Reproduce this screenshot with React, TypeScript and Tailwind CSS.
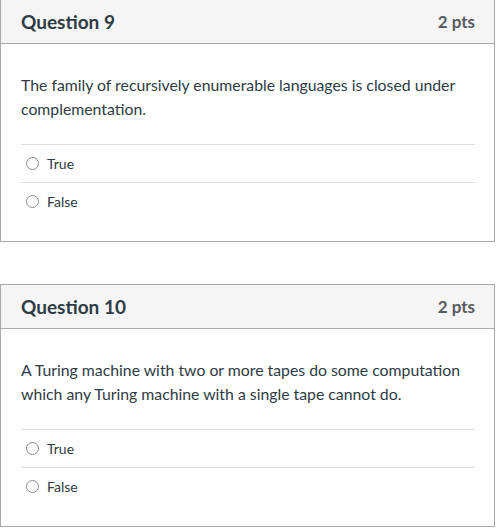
import React from "react";

function Radio() {
  return (
    <span className="inline-block w-[13px] h-[13px] rounded-full border border-[#8a8a8a] bg-white shrink-0" />
  );
}

function Question({ title, text, first }: { title: string; text: React.ReactNode; first?: boolean }) {
  return (
    <div className={`w-[495px] border border-[#a9a9a9] bg-white ${first ? "-mt-px" : "mt-[42px]"}`}>
      <div className="h-[44px] bg-[#f5f5f5] border-b border-[#a9a9a9] flex items-center justify-between pl-[20px] pr-[19px]">
        <span className="text-[19px] font-bold text-[#2d3b45] leading-none">{title}</span>
        <span className="text-[17px] font-bold text-[#555a5e] leading-none">2 pts</span>
      </div>
      <div className="pl-[20px] pr-[19px] pt-[29px] pb-[21px]">
        <div className="text-[15.8px] leading-[24px] text-[#2d3b45]">{text}</div>
        <div className="mt-[23px]">
          {["True", "False"].map((a) => (
            <div key={a} className="h-[38px] border-t border-[#dcdfe1] flex items-center pl-[5px] gap-[8px]">
              <Radio />
              <span className="text-[14px] text-[#2d3b45]">{a}</span>
            </div>
          ))}
        </div>
      </div>
    </div>
  );
}

export default function App() {
  return (
    <div className="w-[496px] h-[530px] bg-white overflow-hidden" style={{ fontFamily: "Lato, 'Open Sans', sans-serif" }}>
      <Question
        first
        title="Question 9"
        text={<>The family of recursively enumerable languages is closed under complementation.</>}
      />
      <Question
        title="Question 10"
        text={<>A Turing machine with two or more tapes do some computation which any Turing machine with a single tape cannot do.</>}
      />
    </div>
  );
}
